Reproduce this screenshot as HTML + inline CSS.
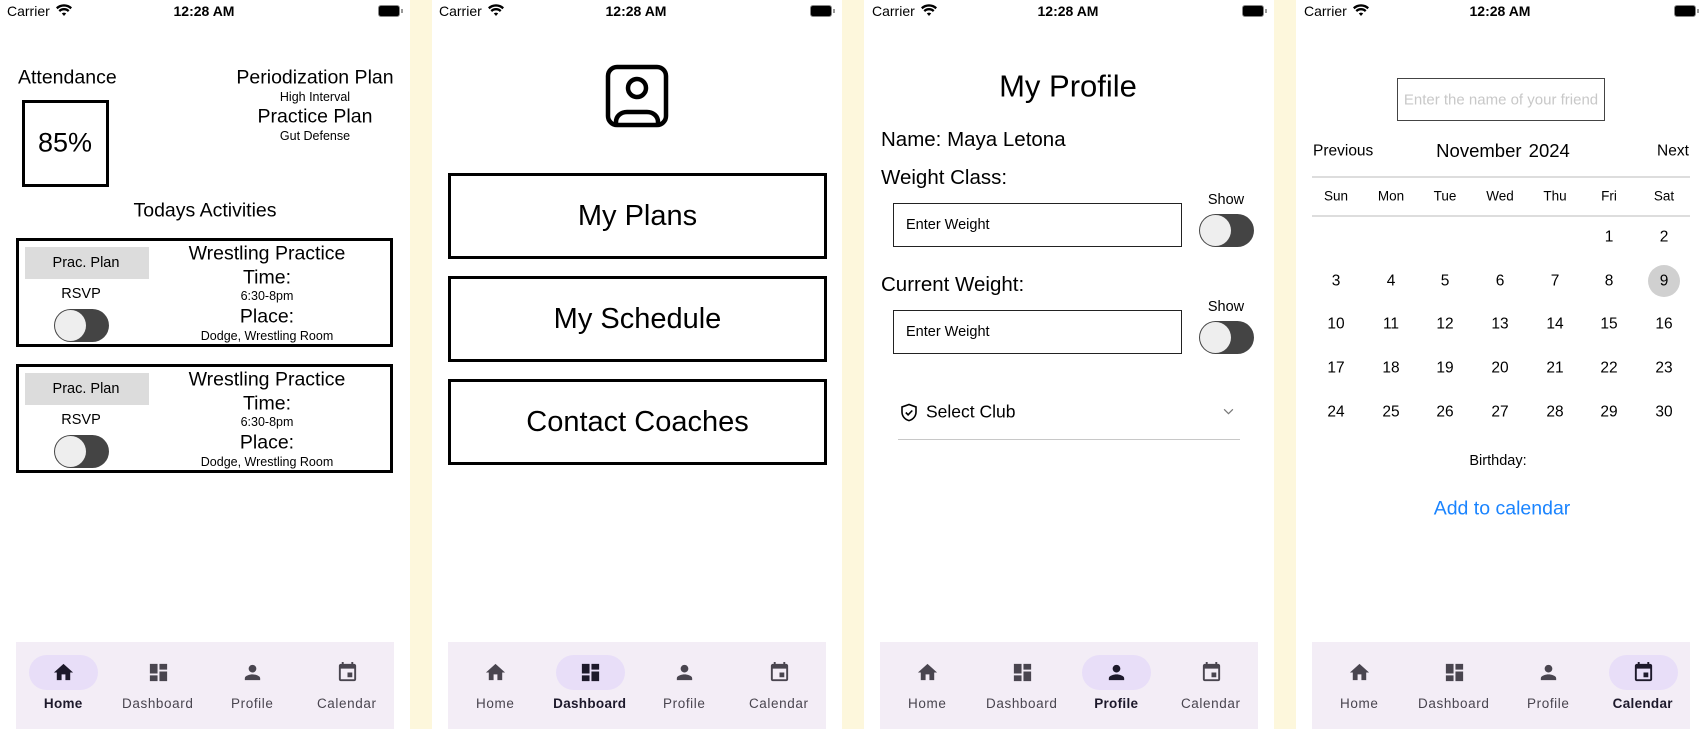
<!DOCTYPE html>
<html><head><meta charset="utf-8">
<style>
*{margin:0;padding:0;box-sizing:border-box}
body{width:1706px;height:729px;background:#fdf7dc;position:relative;overflow:hidden;font-family:"Liberation Sans",sans-serif;color:#000}
.ph{position:absolute;top:0;width:410px;height:729px;background:#fff;overflow:hidden}
.c{position:absolute;transform:translate(-50%,-50%);white-space:nowrap;line-height:1}
.l{position:absolute;transform:translateY(-50%);white-space:nowrap;line-height:1}
.abs{position:absolute}
.tg{position:absolute;width:55px;height:33px;border-radius:17px;background:#444}
.tg:after{content:"";position:absolute;left:1px;top:1px;width:31px;height:31px;border-radius:50%;background:#eee;box-shadow:0 0 1px #555}
.nav{position:absolute;left:16px;top:642px;width:378px;height:87px;background:#f3edf6}
.tab{position:absolute;top:0;width:94.5px;height:87px}
.tab svg{position:absolute;left:36px;top:19px;width:23px;height:23px;fill:#49454f}
.tab .pill{position:absolute;left:13px;top:13px;width:69px;height:35px;border-radius:18px;background:#e8def8}
.tab.a svg{fill:#1d192b}
.tab span{position:absolute;left:0;width:94.5px;text-align:center;top:54px;font-size:13.5px;color:#49454f;letter-spacing:.6px}
.tab.a span{color:#1d192b;font-weight:bold;letter-spacing:.3px}
.card{position:absolute;left:16px;width:377px;height:109px;border:3px solid #000}
.btn{position:absolute;left:16px;width:379px;height:86px;border:3px solid #000;font-size:29px;display:flex;align-items:center;justify-content:center}
.inp{position:absolute;left:29px;width:289px;height:44px;border:1.5px solid #222;font-size:14.5px;padding-left:12px;display:flex;align-items:center}
.big{font-size:19.5px}
</style></head><body>

<div class="ph" style="left:0">
  <div class="l" style="left:7px;top:11px;font-size:14px">Carrier</div>
  <svg class="abs" style="left:56px;top:4px" width="16" height="13" viewBox="0 0 16 13"><path d="M8 12l2.2-2.6a3.4 3.4 0 0 0-4.4 0z M2.5 6.2a8 8 0 0 1 11 0l-1.6 1.8a5.6 5.6 0 0 0-7.8 0z M0 3.4a11.6 11.6 0 0 1 16 0l-1.6 1.8a9.2 9.2 0 0 0-12.8 0z"/></svg>
  <div class="c" style="left:204px;top:11px;font-size:14px;font-weight:bold">12:28 AM</div>
  <div class="abs" style="left:378px;top:5px;width:22px;height:12px;border-radius:3px;background:#000;border:1px solid #888"></div>
  <div class="abs" style="left:401px;top:9px;width:2px;height:4px;background:#999"></div>

  <div class="l big" style="left:18px;top:78px">Attendance</div>
  <div class="abs" style="left:22px;top:100px;width:87px;height:87px;border:3px solid #000"></div>
  <div class="c" style="left:65px;top:143px;font-size:27px">85%</div>
  <div class="c big" style="left:315px;top:78px">Periodization Plan</div>
  <div class="c" style="left:315px;top:97px;font-size:12.5px">High Interval</div>
  <div class="c big" style="left:315px;top:117px">Practice Plan</div>
  <div class="c" style="left:315px;top:136px;font-size:12.5px">Gut Defense</div>
  <div class="c big" style="left:205px;top:211px">Todays Activities</div>

  <div class="card" style="top:238px"></div>
  <div class="abs" style="left:25px;top:247px;width:124px;height:32px;background:#dcdcdc"></div>
  <div class="c" style="left:86px;top:263px;font-size:14.5px">Prac. Plan</div>
  <div class="c" style="left:81px;top:294px;font-size:14.5px">RSVP</div>
  <div class="tg" style="left:54px;top:309px"></div>
  <div class="c big" style="left:267px;top:254px">Wrestling Practice</div>
  <div class="c big" style="left:267px;top:278px">Time:</div>
  <div class="c" style="left:267px;top:296px;font-size:12.5px">6:30-8pm</div>
  <div class="c big" style="left:267px;top:317px">Place:</div>
  <div class="c" style="left:267px;top:336px;font-size:12.5px">Dodge, Wrestling Room</div>

  <div class="card" style="top:364px"></div>
  <div class="abs" style="left:25px;top:373px;width:124px;height:32px;background:#dcdcdc"></div>
  <div class="c" style="left:86px;top:389px;font-size:14.5px">Prac. Plan</div>
  <div class="c" style="left:81px;top:420px;font-size:14.5px">RSVP</div>
  <div class="tg" style="left:54px;top:435px"></div>
  <div class="c big" style="left:267px;top:380px">Wrestling Practice</div>
  <div class="c big" style="left:267px;top:404px">Time:</div>
  <div class="c" style="left:267px;top:422px;font-size:12.5px">6:30-8pm</div>
  <div class="c big" style="left:267px;top:443px">Place:</div>
  <div class="c" style="left:267px;top:462px;font-size:12.5px">Dodge, Wrestling Room</div>

  <div class="nav">
    <div class="tab a" style="left:0"><div class="pill"></div><svg viewBox="0 0 24 24"><path d="M10 20v-6h4v6h5v-8h3L12 3 2 12h3v8z"/></svg><span>Home</span></div>
    <div class="tab" style="left:94.5px"><svg viewBox="0 0 24 24"><path d="M3 13h8V3H3v10zm0 8h8v-6H3v6zm10 0h8V11h-8v10zm0-18v6h8V3h-8z"/></svg><span>Dashboard</span></div>
    <div class="tab" style="left:189px"><svg viewBox="0 0 24 24"><path d="M12 12c2.21 0 4-1.79 4-4s-1.79-4-4-4-4 1.79-4 4 1.79 4 4 4zm0 2c-2.67 0-8 1.34-8 4v2h16v-2c0-2.66-5.33-4-8-4z"/></svg><span>Profile</span></div>
    <div class="tab" style="left:283.5px"><svg viewBox="0 0 24 24"><path d="M17 12h-5v5h5v-5zM16 1v2H8V1H6v2H5c-1.11 0-1.99.9-1.99 2L3 19c0 1.1.89 2 2 2h14c1.1 0 2-.9 2-2V5c0-1.1-.9-2-2-2h-1V1h-2zm3 18H5V8h14v11z"/></svg><span>Calendar</span></div>
  </div>
</div>

<div class="ph" style="left:432px">
  <div class="l" style="left:7px;top:11px;font-size:14px">Carrier</div>
  <svg class="abs" style="left:56px;top:4px" width="16" height="13" viewBox="0 0 16 13"><path d="M8 12l2.2-2.6a3.4 3.4 0 0 0-4.4 0z M2.5 6.2a8 8 0 0 1 11 0l-1.6 1.8a5.6 5.6 0 0 0-7.8 0z M0 3.4a11.6 11.6 0 0 1 16 0l-1.6 1.8a9.2 9.2 0 0 0-12.8 0z"/></svg>
  <div class="c" style="left:204px;top:11px;font-size:14px;font-weight:bold">12:28 AM</div>
  <div class="abs" style="left:378px;top:5px;width:22px;height:12px;border-radius:3px;background:#000;border:1px solid #888"></div>
  <div class="abs" style="left:401px;top:9px;width:2px;height:4px;background:#999"></div>

  <svg class="abs" style="left:173px;top:64px" width="64" height="64" viewBox="0 0 64 64" fill="none" stroke="#000" stroke-width="4.5">
    <rect x="3" y="3" width="58" height="58" rx="9"/>
    <circle cx="32" cy="24" r="9"/>
    <path d="M11 61v-3c0-6 5-10 11-10h20c6 0 11 4 11 10v3"/>
  </svg>
  <div class="btn" style="top:173px">My Plans</div>
  <div class="btn" style="top:276px">My Schedule</div>
  <div class="btn" style="top:379px">Contact Coaches</div>

  <div class="nav">
    <div class="tab" style="left:0"><svg viewBox="0 0 24 24"><path d="M10 20v-6h4v6h5v-8h3L12 3 2 12h3v8z"/></svg><span>Home</span></div>
    <div class="tab a" style="left:94.5px"><div class="pill"></div><svg viewBox="0 0 24 24"><path d="M3 13h8V3H3v10zm0 8h8v-6H3v6zm10 0h8V11h-8v10zm0-18v6h8V3h-8z"/></svg><span>Dashboard</span></div>
    <div class="tab" style="left:189px"><svg viewBox="0 0 24 24"><path d="M12 12c2.21 0 4-1.79 4-4s-1.79-4-4-4-4 1.79-4 4 1.79 4 4 4zm0 2c-2.67 0-8 1.34-8 4v2h16v-2c0-2.66-5.33-4-8-4z"/></svg><span>Profile</span></div>
    <div class="tab" style="left:283.5px"><svg viewBox="0 0 24 24"><path d="M17 12h-5v5h5v-5zM16 1v2H8V1H6v2H5c-1.11 0-1.99.9-1.99 2L3 19c0 1.1.89 2 2 2h14c1.1 0 2-.9 2-2V5c0-1.1-.9-2-2-2h-1V1h-2zm3 18H5V8h14v11z"/></svg><span>Calendar</span></div>
  </div>
</div>

<div class="ph" style="left:864px">
  <div class="l" style="left:8px;top:11px;font-size:14px">Carrier</div>
  <svg class="abs" style="left:57px;top:4px" width="16" height="13" viewBox="0 0 16 13"><path d="M8 12l2.2-2.6a3.4 3.4 0 0 0-4.4 0z M2.5 6.2a8 8 0 0 1 11 0l-1.6 1.8a5.6 5.6 0 0 0-7.8 0z M0 3.4a11.6 11.6 0 0 1 16 0l-1.6 1.8a9.2 9.2 0 0 0-12.8 0z"/></svg>
  <div class="c" style="left:204px;top:11px;font-size:14px;font-weight:bold">12:28 AM</div>
  <div class="abs" style="left:378px;top:5px;width:22px;height:12px;border-radius:3px;background:#000;border:1px solid #888"></div>
  <div class="abs" style="left:401px;top:9px;width:2px;height:4px;background:#999"></div>

  <div class="c" style="left:204px;top:86px;font-size:31px">My Profile</div>
  <div class="l" style="left:17px;top:140px;font-size:20.5px">Name: Maya Letona</div>
  <div class="l" style="left:17px;top:178px;font-size:20.5px">Weight Class:</div>
  <div class="inp" style="top:203px">Enter Weight</div>
  <div class="c" style="left:362px;top:200px;font-size:14.5px">Show</div>
  <div class="tg" style="left:335px;top:214px"></div>
  <div class="l" style="left:17px;top:285px;font-size:20.5px">Current Weight:</div>
  <div class="inp" style="top:310px">Enter Weight</div>
  <div class="c" style="left:362px;top:307px;font-size:14.5px">Show</div>
  <div class="tg" style="left:335px;top:321px"></div>

  <svg class="abs" style="left:36px;top:403px" width="18" height="19" viewBox="0 0 18 19" fill="none" stroke="#000" stroke-width="1.6"><path d="M9 1.5L2 4v5c0 4.3 3 7.6 7 8.6 4-1 7-4.3 7-8.6V4z"/><path d="M5.8 9.5l2.3 2.3 4.2-4.3"/></svg>
  <div class="l" style="left:62px;top:412px;font-size:17.5px">Select Club</div>
  <svg class="abs" style="left:359px;top:408px" width="11" height="7" viewBox="0 0 12 8" fill="none" stroke="#777" stroke-width="1.4"><path d="M1 1.5l5 5 5-5"/></svg>
  <div class="abs" style="left:34px;top:439px;width:342px;height:1px;background:#c8c8c8"></div>

  <div class="nav">
    <div class="tab" style="left:0"><svg viewBox="0 0 24 24"><path d="M10 20v-6h4v6h5v-8h3L12 3 2 12h3v8z"/></svg><span>Home</span></div>
    <div class="tab" style="left:94.5px"><svg viewBox="0 0 24 24"><path d="M3 13h8V3H3v10zm0 8h8v-6H3v6zm10 0h8V11h-8v10zm0-18v6h8V3h-8z"/></svg><span>Dashboard</span></div>
    <div class="tab a" style="left:189px"><div class="pill"></div><svg viewBox="0 0 24 24"><path d="M12 12c2.21 0 4-1.79 4-4s-1.79-4-4-4-4 1.79-4 4 1.79 4 4 4zm0 2c-2.67 0-8 1.34-8 4v2h16v-2c0-2.66-5.33-4-8-4z"/></svg><span>Profile</span></div>
    <div class="tab" style="left:283.5px"><svg viewBox="0 0 24 24"><path d="M17 12h-5v5h5v-5zM16 1v2H8V1H6v2H5c-1.11 0-1.99.9-1.99 2L3 19c0 1.1.89 2 2 2h14c1.1 0 2-.9 2-2V5c0-1.1-.9-2-2-2h-1V1h-2zm3 18H5V8h14v11z"/></svg><span>Calendar</span></div>
  </div>
</div>

<div class="ph" style="left:1296px">
  <div class="l" style="left:8px;top:11px;font-size:14px">Carrier</div>
  <svg class="abs" style="left:57px;top:4px" width="16" height="13" viewBox="0 0 16 13"><path d="M8 12l2.2-2.6a3.4 3.4 0 0 0-4.4 0z M2.5 6.2a8 8 0 0 1 11 0l-1.6 1.8a5.6 5.6 0 0 0-7.8 0z M0 3.4a11.6 11.6 0 0 1 16 0l-1.6 1.8a9.2 9.2 0 0 0-12.8 0z"/></svg>
  <div class="c" style="left:204px;top:11px;font-size:14px;font-weight:bold">12:28 AM</div>
  <div class="abs" style="left:378px;top:5px;width:22px;height:12px;border-radius:3px;background:#000;border:1px solid #888"></div>
  <div class="abs" style="left:401px;top:9px;width:2px;height:4px;background:#999"></div>

  <div class="abs" style="left:101px;top:78px;width:208px;height:43px;border:1.5px solid #444"></div>
  <div class="c" style="left:205px;top:100px;font-size:15px;color:#c8c8c8">Enter the name of your friend</div>
  <div class="l" style="left:17px;top:151px;font-size:15.5px">Previous</div>
  <div class="c" style="left:207px;top:151px;font-size:18.5px;word-spacing:2px">November 2024</div>
  <div class="l" style="left:361px;top:151px;font-size:15.5px">Next</div>
  <div class="abs" style="left:16px;top:176px;width:378px;height:1.5px;background:#ddd"></div>
  <div class="abs" style="left:16px;top:215px;width:378px;height:1.5px;background:#ddd"></div>
  <div style="font-size:13.5px">
  <div class="c" style="left:40px;top:196px">Sun</div>
  <div class="c" style="left:95px;top:196px">Mon</div>
  <div class="c" style="left:149px;top:196px">Tue</div>
  <div class="c" style="left:204px;top:196px">Wed</div>
  <div class="c" style="left:259px;top:196px">Thu</div>
  <div class="c" style="left:313px;top:196px">Fri</div>
  <div class="c" style="left:368px;top:196px">Sat</div>
  </div>

  <div class="abs" style="left:352px;top:265px;width:32px;height:32px;border-radius:50%;background:#d0d0d0"></div>
  <div style="font-size:15.5px">
  <div class="c" style="left:313px;top:237px">1</div><div class="c" style="left:368px;top:237px">2</div>
  <div class="c" style="left:40px;top:281px">3</div><div class="c" style="left:95px;top:281px">4</div><div class="c" style="left:149px;top:281px">5</div><div class="c" style="left:204px;top:281px">6</div><div class="c" style="left:259px;top:281px">7</div><div class="c" style="left:313px;top:281px">8</div><div class="c" style="left:368px;top:281px">9</div>
  <div class="c" style="left:40px;top:324px">10</div><div class="c" style="left:95px;top:324px">11</div><div class="c" style="left:149px;top:324px">12</div><div class="c" style="left:204px;top:324px">13</div><div class="c" style="left:259px;top:324px">14</div><div class="c" style="left:313px;top:324px">15</div><div class="c" style="left:368px;top:324px">16</div>
  <div class="c" style="left:40px;top:368px">17</div><div class="c" style="left:95px;top:368px">18</div><div class="c" style="left:149px;top:368px">19</div><div class="c" style="left:204px;top:368px">20</div><div class="c" style="left:259px;top:368px">21</div><div class="c" style="left:313px;top:368px">22</div><div class="c" style="left:368px;top:368px">23</div>
  <div class="c" style="left:40px;top:412px">24</div><div class="c" style="left:95px;top:412px">25</div><div class="c" style="left:149px;top:412px">26</div><div class="c" style="left:204px;top:412px">27</div><div class="c" style="left:259px;top:412px">28</div><div class="c" style="left:313px;top:412px">29</div><div class="c" style="left:368px;top:412px">30</div>
  </div>
  <div class="c" style="left:202px;top:461px;font-size:14.5px">Birthday:</div>
  <div class="c" style="left:206px;top:509px;font-size:19.5px;color:#1a84ff">Add to calendar</div>

  <div class="nav">
    <div class="tab" style="left:0"><svg viewBox="0 0 24 24"><path d="M10 20v-6h4v6h5v-8h3L12 3 2 12h3v8z"/></svg><span>Home</span></div>
    <div class="tab" style="left:94.5px"><svg viewBox="0 0 24 24"><path d="M3 13h8V3H3v10zm0 8h8v-6H3v6zm10 0h8V11h-8v10zm0-18v6h8V3h-8z"/></svg><span>Dashboard</span></div>
    <div class="tab" style="left:189px"><svg viewBox="0 0 24 24"><path d="M12 12c2.21 0 4-1.79 4-4s-1.79-4-4-4-4 1.79-4 4 1.79 4 4 4zm0 2c-2.67 0-8 1.34-8 4v2h16v-2c0-2.66-5.33-4-8-4z"/></svg><span>Profile</span></div>
    <div class="tab a" style="left:283.5px"><div class="pill"></div><svg viewBox="0 0 24 24"><path d="M17 12h-5v5h5v-5zM16 1v2H8V1H6v2H5c-1.11 0-1.99.9-1.99 2L3 19c0 1.1.89 2 2 2h14c1.1 0 2-.9 2-2V5c0-1.1-.9-2-2-2h-1V1h-2zm3 18H5V8h14v11z"/></svg><span>Calendar</span></div>
  </div>
</div>
</body></html>
